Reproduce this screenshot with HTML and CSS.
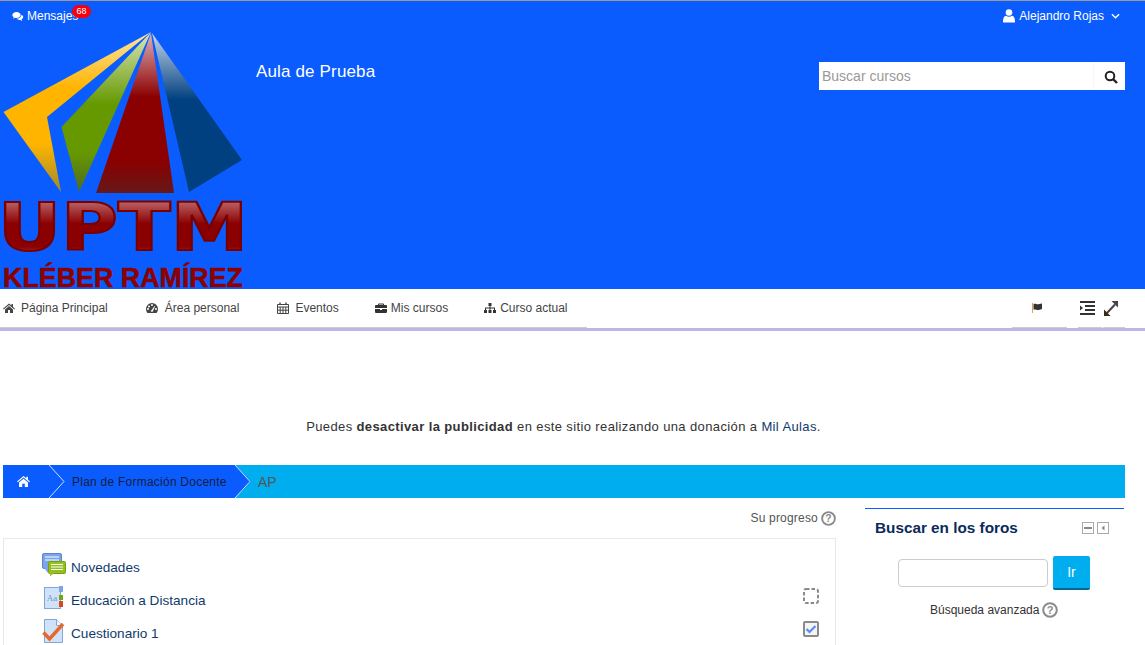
FILE: index.html
```html
<!DOCTYPE html>
<html lang="es">
<head>
    <meta charset="UTF-8">
    <title>Aula de Prueba</title>
    <link rel="stylesheet" href="styles.css">
</head>
<body>
    <header class="site-header">
        <div class="top-bar">
            <a class="messages">
                <svg class="icon-msg" viewBox="0 0 16 14"><path fill="#fff" d="M6 1C2.9 1 .5 2.8.5 5c0 1.2.7 2.300 1.800 3L1.500 10l2.500-1.200c.6.2 1.300.2 2 .2 3.100 0 5.500-1.800 5.500-4S9.100 1 6 1z"/><path fill="#fff" d="M12.500 4.500c.1 3-3 5.200-6.300 5.300.8 1 2.200 1.700 3.800 1.700l1 0 2.500 1.500-.7-2.200c1.300-.6 2.200-1.700 2.200-3 0-1.500-1-2.700-2.500-3.300z"/></svg>
                <span>Mensajes</span>
                <span class="badge">68</span>
            </a>
            <a class="user-menu">
                <svg class="icon-user" viewBox="0 0 12 14"><circle cx="6" cy="3.500" r="3.300" fill="#fff"/><path fill="#fff" d="M.5 13.500c-.5 0-.5-.5-.5-1C0 9.500 1 7 3 6.800c1.800 1.200 4.200 1.200 6 0 2 .2 3 2.700 3 5.700 0 .5 0 1-.5 1z"/></svg>
                <span>Alejandro Rojas</span>
                <svg class="icon-chevron" viewBox="0 0 10 6"><path fill="none" stroke="#fff" stroke-width="1.500" d="M1 1l4 4 4-4"/></svg>
            </a>
        </div>
        <div class="brand-row">
            <svg class="logo" viewBox="0 31 245 258">
                <defs>
                    <linearGradient id="gy" x1="0" y1="0" x2="0" y2="1"><stop offset="0" stop-color="#ffe6a8"/><stop offset=".35" stop-color="#ffb400"/><stop offset=".7" stop-color="#ffb400"/><stop offset="1" stop-color="#a08a28"/></linearGradient>
                    <linearGradient id="gg" x1="0" y1="0" x2="0" y2="1"><stop offset="0" stop-color="#d8e6b8"/><stop offset=".45" stop-color="#669900"/><stop offset=".75" stop-color="#669900"/><stop offset="1" stop-color="#4f6a20"/></linearGradient>
                    <linearGradient id="gr" x1="0" y1="0" x2="0" y2="1"><stop offset="0" stop-color="#e0b0b8"/><stop offset=".4" stop-color="#8b0000"/><stop offset=".8" stop-color="#8b0000"/><stop offset="1" stop-color="#65181a"/></linearGradient>
                    <linearGradient id="gb" x1="0" y1="0" x2="0" y2="1"><stop offset="0" stop-color="#c4d6ea"/><stop offset=".42" stop-color="#004080"/><stop offset="1" stop-color="#004080"/></linearGradient>
                    <linearGradient id="gt" x1="0" y1="0" x2="0" y2="1"><stop offset="0" stop-color="#d49aa0"/><stop offset=".45" stop-color="#8b0000"/><stop offset=".75" stop-color="#8b0000"/><stop offset="1" stop-color="#c88a90"/></linearGradient>
                </defs>
                <polygon fill="url(#gy)" points="151,32 3.500,112 61,192 47,117"/>
                <polygon fill="url(#gg)" points="151,32 61.500,127 79,192"/>
                <polygon fill="url(#gr)" points="151,33 96,193 174,193"/>
                <polygon fill="url(#gb)" points="152,33 242,160 189,192"/>
                <text class="logo-big" x="-2" y="250" textLength="250" lengthAdjust="spacingAndGlyphs">UPTM</text>
                <text class="logo-small" x="3" y="287" textLength="240" lengthAdjust="spacingAndGlyphs">KLÉBER RAMÍREZ</text>
            </svg>
            <div class="site-name">Aula de Prueba</div>
            <form class="course-search">
                <input type="text" placeholder="Buscar cursos">
                <button type="button">
                    <svg viewBox="0 0 14 14"><circle cx="6" cy="6" r="4.300" fill="none" stroke="#222" stroke-width="2"/><path stroke="#222" stroke-width="2.400" d="M9 9l4 4"/></svg>
                </button>
            </form>
        </div>
    </header>

    <nav class="main-nav">
        <ul class="nav-left">
            <li><svg class="nav-icon" viewBox="0 0 12 12"><path fill="#444" d="M6 1.500L0 6.800l.7.7L6 3l5.300 4.500.7-.7-2-1.800V2H8.500v1.600zM2 7.500V11h3V8h2v3h3V7.500L6 4z"/></svg>Página Principal</li>
            <li><svg class="nav-icon" viewBox="0 0 12 12"><path fill="#444" fill-rule="evenodd" d="M6 1a6 6 0 0 0-6 6c0 1.500.5 2.800 1.400 4h9.200C11.500 9.800 12 8.500 12 7a6 6 0 0 0-6-6zM3 7a1 1 0 1 1-2 0 1 1 0 0 1 2 0zm1-2.500a1 1 0 1 1-2 0 1 1 0 0 1 2 0zM7 3a1 1 0 1 1-2 0 1 1 0 0 1 2 0zm-.2 6.500a1.200 1.200 0 0 1-2-.6c0-.5.6-.9 1-1L8.500 4l.6.300zM11 7a1 1 0 1 1-2 0 1 1 0 0 1 2 0z"/></svg>Área personal</li>
            <li class="narrow"><svg class="nav-icon" viewBox="0 0 12 12"><path fill="none" stroke="#444" d="M.5 2.500h11v9H.5zM.5 5h11M3.200 5v6.500M6 5v6.500M8.800 5v6.500M.5 8.200h11"/><path stroke="#444" stroke-width="1.400" d="M3 .5v2.500M9 .5v2.500"/></svg>Eventos</li>
            <li class="tight"><svg class="nav-icon" viewBox="0 0 12 12"><path fill="#333" d="M4 1.500h4a1 1 0 0 1 1 1V3h2a1 1 0 0 1 1 1v2H0V4a1 1 0 0 1 1-1h2v-.5a1 1 0 0 1 1-1zM4 3h4v-.6H4zM0 7h5v1h2V7h5v3a1 1 0 0 1-1 1H1a1 1 0 0 1-1-1z"/></svg>Mis cursos</li>
            <li class="tight"><svg class="nav-icon" viewBox="0 0 12 12"><path fill="#333" d="M4.500 1h3v3h-1v1.500H11V8h1v3H9V8h1V6.500H6.500V8h1v3h-3V8h1V6.500H2V8h1v3H0V8h1V5.500h4.500V4h-1z"/></svg>Curso actual</li>
        </ul>
        <div class="nav-right">
            <div class="nav-flag">
                <svg viewBox="0 0 12 10"><path stroke="#e0a050" d="M.5 0v10"/><path fill="#333" d="M1.500 1c2-.8 3 .6 5 .3 1.400-.2 2.500-.7 3.500-.8v5.500c-1 .3-2 .9-3.500 1-2 .2-3-1-5-.3z"/></svg>
            </div>
            <div class="nav-outdent">
                <svg viewBox="0 0 15 14"><path fill="#333" d="M0 0h15v2H0zM5 4h10v2H5zM5 8h10v2H5zM0 12h15v2H0zM0 4.500L3 7l-3 2.500z"/></svg>
            </div>
            <div class="nav-expand">
                <svg viewBox="0 0 14 15"><path fill="none" stroke="#444" stroke-width="2" d="M3 12l8-8.500"/><path fill="#3a2a10" d="M0 15V8.500L6.500 15z"/><path fill="#444" d="M14 0v6.500L7.500 0z"/></svg>
            </div>
        </div>
    </nav>

    <div class="ad-note">Puedes <strong>desactivar la publicidad</strong> en este sitio realizando una donación a <span class="ad-link">Mil Aulas</span>.</div>

    <div class="breadcrumb">
        <div class="crumb-home">
            <svg viewBox="0 0 13 11"><path fill="#fff" d="M6.500 0L0 5.500l.8.8L6.500 1.600l5.700 4.700.8-.8L11 3.800V.8H9.300v1.500zM2 6.500V11h3.200V7.800h2.600V11H11V6.500L6.500 2.800z"/></svg>
        </div>
        <svg class="crumb-sep" viewBox="0 0 16 33"><rect width="16" height="33" fill="#0a5cff"/><path fill="none" stroke="#cfe0ff" d="M0 0l15 16.500L0 33"/></svg>
        <div class="crumb-plan">Plan de Formación Docente</div>
        <svg class="crumb-sep" viewBox="0 0 16 33"><polygon fill="#0a5cff" points="0,0 0,33 16,16.500"/><path fill="none" stroke="#cfe0ff" d="M0 0l15 16.500L0 33"/></svg>
        <div class="crumb-current">AP</div>
    </div>

    <div class="page-columns">
        <section class="course-col">
            <div class="progress-row">
                <span>Su progreso</span>
                <svg class="help-icon" viewBox="0 0 16 16"><circle cx="8" cy="8" r="6.800" fill="none" stroke="#8a8a8a" stroke-width="2"/><text x="8" y="12" class="help-mark">?</text></svg>
            </div>
            <ul class="activity-list">
                <li class="activity">
                    <svg class="activity-icon" viewBox="0 0 24 24"><rect x="0.500" y="0.500" width="19" height="15" rx="1.500" fill="#7aa5ea" stroke="#5a85cc"/><path stroke="#fff" d="M3 4h14M3 7h14"/><path fill="#7aa5ea" d="M2 15h4v5z"/><rect x="6.500" y="8.500" width="17" height="12" rx="1" fill="#93c01f" stroke="#76a010"/><path stroke="#fff" d="M9 11.500h12M9 14h12M9 16.500h12"/><path fill="#93c01f" d="M8 20h4l-4 3.500z"/></svg>
                    <span class="activity-name">Novedades</span>
                </li>
                <li class="activity">
                    <svg class="activity-icon" viewBox="0 0 24 24"><rect x="2.500" y="1.500" width="16" height="21" fill="#cfe2f7" stroke="#7fa8d8"/><text x="10" y="15" class="aa-mark">Aa</text><rect x="17" y="0" width="4" height="6" fill="#7aa5ea"/><rect x="17" y="9" width="4" height="5" fill="#6aa820"/><rect x="17" y="15" width="4" height="6" fill="#d84a20"/></svg>
                    <span class="activity-name">Educación a Distancia</span>
                    <svg class="check-state" viewBox="0 0 16 16"><rect x="1" y="1" width="14" height="14" rx="2" fill="none" stroke="#8a8a8a" stroke-width="2" stroke-dasharray="3.500 2"/></svg>
                </li>
                <li class="activity">
                    <svg class="activity-icon" viewBox="0 0 24 24"><path fill="#cfe2f7" stroke="#7fa8d8" d="M2.500.5h12l6 6v17h-18z"/><path fill="#eef5fd" stroke="#7fa8d8" d="M14.500.5v6h6"/><path fill="none" stroke="#e8662a" stroke-width="3.400" d="M1.500 13.500l6 6.500L21 5"/></svg>
                    <span class="activity-name">Cuestionario 1</span>
                    <svg class="check-state" viewBox="0 0 16 16"><rect x="1" y="1" width="14" height="14" rx="1" fill="#f4f4f4" stroke="#8a8a8a" stroke-width="2"/><path fill="none" stroke="#5b8def" stroke-width="2.200" d="M3.500 8l3 3 6-6"/></svg>
                </li>
            </ul>
        </section>

        <aside class="side-block">
            <div class="block-head">
                <h2>Buscar en los foros</h2>
                <div class="block-controls">
                    <svg viewBox="0 0 12 12"><rect x=".5" y=".5" width="11" height="11" fill="#fff" stroke="#aaa"/><path stroke="#888" stroke-width="2" d="M2 6h8"/></svg>
                    <svg viewBox="0 0 12 12"><rect x=".5" y=".5" width="11" height="11" fill="#fff" stroke="#aaa"/><path fill="#888" d="M7.500 3.500v5L4.500 6z"/></svg>
                </div>
            </div>
            <div class="forum-search">
                <input type="text">
                <button type="button">Ir</button>
            </div>
            <div class="advanced">
                <span>Búsqueda avanzada</span>
                <svg class="help-icon" viewBox="0 0 16 16"><circle cx="8" cy="8" r="6.800" fill="none" stroke="#8a8a8a" stroke-width="2"/><text x="8" y="12" class="help-mark">?</text></svg>
            </div>
        </aside>
    </div>
</body>
</html>
```

FILE: styles.css
```css
html, body {
    height: 645px;
    overflow: hidden;
}
body {
    margin: 0;
    font-family: "Liberation Sans", Arial, sans-serif;
    font-size: 12px;
    color: #333;
    background: #fff;
}
ul {
    list-style: none;
    margin: 0;
    padding: 0;
}
svg {
    display: block;
    flex: none;
}

/* header */
.site-header {
    background: #0a5cff;
    border-top: 1px solid #999;
    height: 288px;
    color: #fff;
    position: relative;
}
.top-bar {
    display: flex;
    justify-content: space-between;
    align-items: center;
    height: 30px;
    padding: 0 25px 0 12px;
}
.messages, .user-menu {
    display: flex;
    align-items: center;
    position: relative;
}
.icon-msg {
    width: 12px;
    height: 11px;
    margin-right: 3px;
}
.badge {
    position: absolute;
    left: 60px;
    top: -4px;
    width: 19px;
    height: 13px;
    border-radius: 7px;
    background: #f5000f;
    color: #fff;
    font-size: 9px;
    line-height: 13px;
    text-align: center;
}
.icon-user {
    width: 12px;
    height: 14px;
    margin-right: 4px;
}
.icon-chevron {
    width: 9px;
    height: 6px;
    margin-left: 7px;
}
.brand-row {
    display: flex;
    align-items: flex-start;
}
.logo {
    width: 245px;
    height: 258px;
    overflow: visible;
}
.logo-big {
    font-family: "DejaVu Sans", sans-serif;
    font-size: 66px;
    font-weight: bold;
    fill: url(#gt);
    stroke: #7a0000;
    stroke-width: 2;
}
.logo-small {
    font-size: 27px;
    font-weight: bold;
    fill: #8b0000;
    stroke: #8b0000;
    stroke-width: .5;
}
.site-name {
    margin: 31px 0 0 11px;
    font-size: 17px;
    line-height: 20px;
    letter-spacing: .15px;
}
.course-search {
    display: flex;
    margin: 31px 20px 0 auto;
    width: 306px;
    height: 28px;
    background: #fff;
}
.course-search input {
    flex: 1;
    min-width: 0;
    border: none;
    padding: 0 3px;
    font: 14px "Liberation Sans", Arial, sans-serif;
    outline: none;
}
.course-search input::placeholder {
    color: #999;
}
.course-search button {
    display: flex;
    align-items: center;
    width: 32px;
    border: none;
    border-left: 1px solid #f7f7f7;
    background: #fff;
    padding: 2px 0 0 10px;
}
.course-search svg {
    width: 14px;
    height: 14px;
}

/* nav */
.main-nav {
    display: flex;
    justify-content: space-between;
    height: 39px;
    border-bottom: 3px solid #bcb5e8;
}
.nav-left {
    display: flex;
    box-sizing: border-box;
    border-bottom: 1px solid #ccc;
    height: 39px;
}
.nav-left li {
    display: flex;
    align-items: center;
    padding: 0 19px;
    color: #444;
}
.nav-left li:first-child {
    padding-left: 3px;
}
.nav-left li.tight {
    padding-left: 17px;
}
.nav-icon {
    width: 12px;
    height: 12px;
    margin-right: 7px;
}
.nav-left li:first-child .nav-icon, .nav-left li.narrow .nav-icon {
    margin-right: 6px;
}
.nav-left li.tight .nav-icon {
    margin-right: 4px;
}
.nav-right {
    display: flex;
    margin-right: 20px;
    height: 39px;
}
.nav-right div {
    display: flex;
    align-items: center;
    box-sizing: border-box;
    border-bottom: 1px solid #ccc;
}
.nav-flag {
    width: 55px;
    padding-left: 20px;
    margin-right: 11px;
}
.nav-flag svg {
    width: 12px;
    height: 10px;
}
.nav-outdent {
    width: 24px;
    padding-left: 2px;
    margin-right: 1px;
}
.nav-outdent svg {
    width: 15px;
    height: 14px;
}
.nav-expand {
    width: 22px;
    padding-left: 1px;
}
.nav-expand svg {
    width: 14px;
    height: 15px;
}

/* aviso */
.ad-note {
    height: 134px;
    padding: 87px 18px 0 0;
    box-sizing: border-box;
    text-align: center;
    font-size: 13px;
    line-height: 17px;
    letter-spacing: .38px;
}
.ad-link {
    color: #0f3a6b;
}

/* breadcrumb */
.breadcrumb {
    display: flex;
    align-items: center;
    height: 33px;
    margin: 0 20px 0 3px;
    background: #00aeef;
    font-size: 12px;
}
.crumb-home {
    display: flex;
    align-items: center;
    width: 46px;
    height: 33px;
    padding-left: 14px;
    box-sizing: border-box;
    background: #0a5cff;
}
.crumb-home svg {
    width: 13px;
    height: 11px;
}
.crumb-sep {
    width: 16px;
    height: 33px;
}
.crumb-plan {
    display: flex;
    align-items: center;
    width: 170px;
    height: 33px;
    padding: 1px 0 0 7px;
    box-sizing: border-box;
    background: #0a5cff;
    color: #14213d;
    letter-spacing: .24px;
}
.crumb-current {
    padding-left: 7px;
    color: #555;
    font-size: 14px;
}

/* columnas */
.page-columns {
    display: flex;
    gap: 29px;
    margin: 0 21px 0 3px;
}
.course-col {
    width: 833px;
}
.progress-row {
    display: flex;
    justify-content: flex-end;
    align-items: center;
    gap: 3px;
    height: 16px;
    margin-top: 12px;
    margin-bottom: 12px;
    letter-spacing: .2px;
    color: #555;
}
.help-icon {
    width: 15px;
    height: 15px;
}
.help-mark {
    font-size: 11px;
    font-weight: bold;
    fill: #8a8a8a;
    text-anchor: middle;
}
.activity-list {
    border: 1px solid #e8e8e8;
    height: 200px;
    padding-top: 9px;
    box-sizing: border-box;
}
.activity {
    display: flex;
    align-items: center;
    height: 33px;
    padding: 0 16px 0 38px;
}
.activity-icon {
    width: 24px;
    height: 24px;
}
.aa-mark {
    font-family: "Liberation Serif", serif;
    font-size: 9px;
    fill: #6f94c8;
    text-anchor: middle;
}
.activity-name {
    margin: 6px 0 0 5px;
    font-size: 13.6px;
    color: #0f3a6b;
}
.check-state {
    width: 16px;
    height: 16px;
    margin: -4px 0 0 auto;
}

/* bloque lateral */
.side-block {
    width: 259px;
    margin-top: 10px;
    border-top: 1px solid #0a5cff;
    height: 130px;
}
.block-head {
    display: flex;
    align-items: center;
    justify-content: space-between;
    padding: 10px 15px 0 10px;
}
.block-head h2 {
    margin: 0;
    font-size: 15.3px;
    line-height: 18px;
    color: #0a2a5c;
}
.block-controls {
    display: flex;
    gap: 3px;
}
.block-controls svg {
    width: 12px;
    height: 12px;
}
.forum-search {
    display: flex;
    align-items: center;
    gap: 5px;
    margin: 19px 0 0 33px;
}
.forum-search input {
    width: 150px;
    height: 28px;
    box-sizing: border-box;
    border: 1px solid #ccc;
    border-radius: 4px;
    padding: 0 6px;
}
.forum-search button {
    width: 37px;
    height: 34px;
    border: none;
    border-bottom: 2px solid #006a94;
    border-radius: 2px;
    background: #00aeef;
    color: #fff;
    font: 14px "Liberation Sans", Arial, sans-serif;
}
.advanced {
    display: flex;
    align-items: center;
    gap: 3px;
    margin: 12px 0 0 65px;
    color: #333;
}
.advanced .help-icon {
    width: 16px;
    height: 16px;
}
```
